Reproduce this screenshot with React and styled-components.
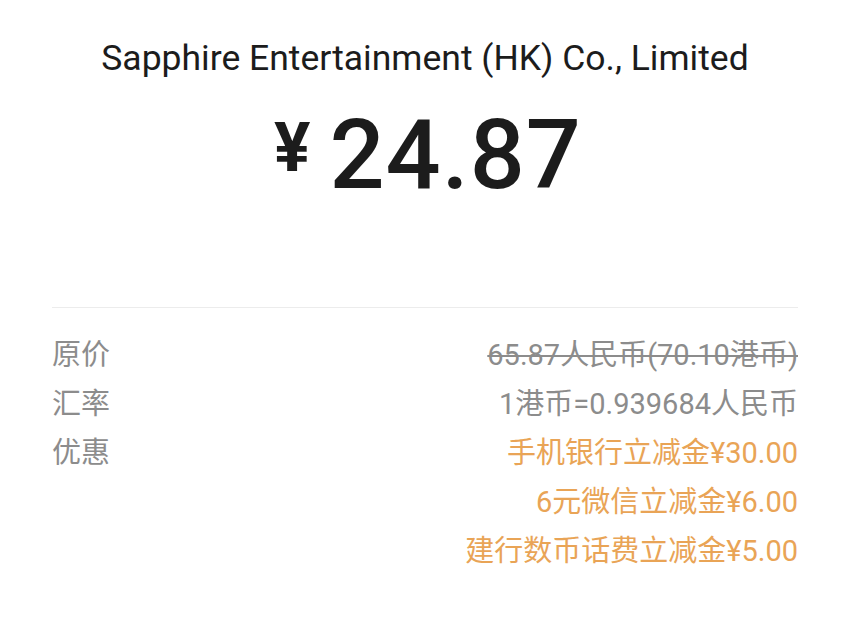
import React from 'react'
import styled, { createGlobalStyle } from 'styled-components';

const GlobalStyle = createGlobalStyle`
  html, body {
    margin: 0;
    padding: 0;
    background: #fff;
  }
  body {
    font-family: Roboto, "Noto Sans CJK SC", sans-serif;
  }
`;

const discounts = [
  '手机银行立减金¥30.00',
  '6元微信立减金¥6.00',
  '建行数币话费立减金¥5.00',
];

const App = () => {
  return (
    <Wrapper>
      <GlobalStyle />
      <Merchant>Sapphire Entertainment (HK) Co., Limited</Merchant>
      <Amount>
        <Yen>¥</Yen>
        <Value>24.87</Value>
      </Amount>
      <Divider />
      <Details>
        <Row>
          <Label>原价</Label>
          <Values><Text strike>65.87人民币(70.10港币)</Text></Values>
        </Row>
        <Row>
          <Label>汇率</Label>
          <Values><Text>1港币=0.939684人民币</Text></Values>
        </Row>
        <Row>
          <Label>优惠</Label>
          <Values>
            {discounts.map((d) => (
              <Text key={d} accent>{d}</Text>
            ))}
          </Values>
        </Row>
      </Details>
    </Wrapper>
  )
}

const Wrapper = styled.div`
  width: 850px;
  height: 624px;
  box-sizing: border-box;
  padding: 35px 52px 0;
  display: flex;
  flex-direction: column;
`;

const Merchant = styled.div`
  text-align: center;
  font-size: 35.5px;
  line-height: 46px;
  color: #1c1c1c;
`;

const Amount = styled.div`
  display: flex;
  justify-content: center;
  align-items: flex-start;
  margin-top: 22px;
  color: #1c1c1c;
`;

const Yen = styled.span`
  font-size: 68px;
  font-weight: 700;
  line-height: 1;
  margin-top: 11px;
  margin-right: 19px;
  margin-left: 6px;
`;

const Value = styled.span`
  font-size: 97px;
  font-weight: 500;
  line-height: 104px;
  letter-spacing: 1px;
`;

const Divider = styled.div`
  height: 1px;
  background: #ececec;
  margin-top: 100px;
`;

const Details = styled.div`
  margin-top: 23px;
  display: flex;
  flex-direction: column;
`;

const Row = styled.div`
  display: flex;
  justify-content: space-between;
  align-items: flex-start;
`;

const Label = styled.div`
  font-size: 29px;
  line-height: 49px;
  color: #8c8c8c;
`;

const Values = styled.div`
  display: flex;
  flex-direction: column;
  align-items: flex-end;
`;

const Text = styled.div`
  font-size: 29px;
  line-height: 49px;
  color: ${({ accent }) => (accent ? '#e9a456' : '#8c8c8c')};
  text-decoration: ${({ strike }) => (strike ? 'line-through' : 'none')};
`;

export default App
